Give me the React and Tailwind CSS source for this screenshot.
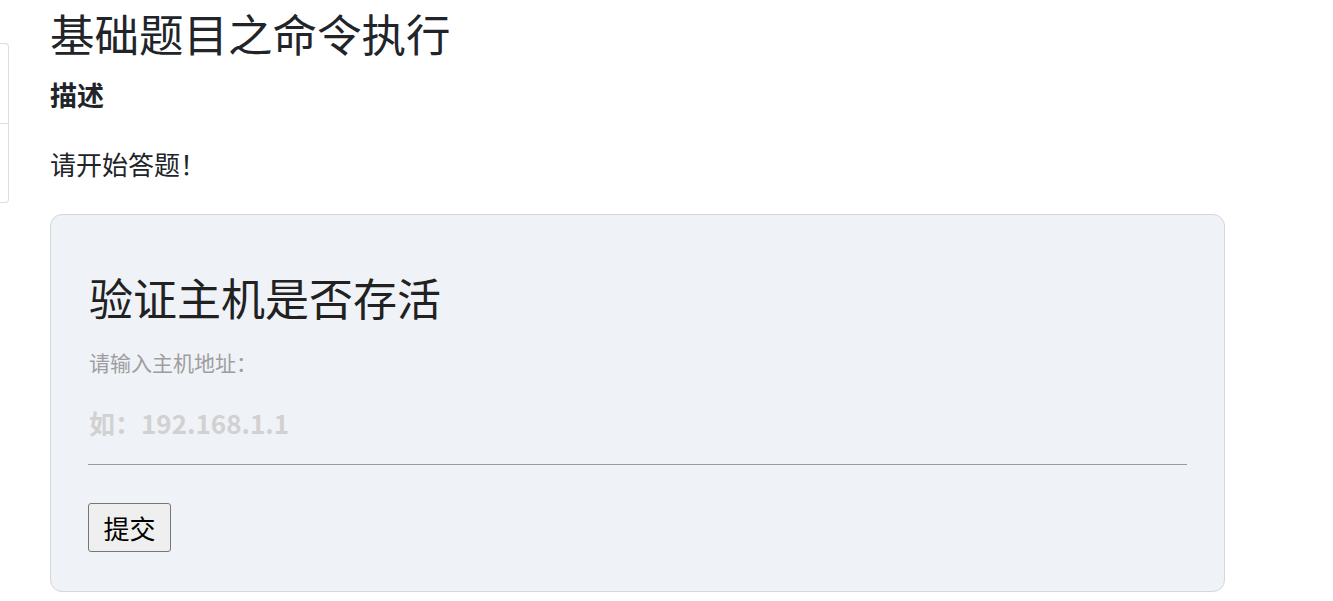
import React from 'react';

const cjk = { fontFamily: '"Microsoft YaHei", "Noto Sans CJK SC", "Noto Sans", sans-serif' };

function SidePanel() {
  return (
    <div className="mt-[43px] w-[9px] h-[160px] flex-shrink-0 flex flex-col border border-l-0 border-[#dedede] rounded-r-[4px] bg-white">
      <div className="h-[80px] border-b border-[#dedede]" />
      <div className="flex-1" />
    </div>
  );
}

export default function App() {
  const [host, setHost] = React.useState('');

  return (
    <div className="min-h-screen w-full bg-white text-[#212529] flex" style={cjk}>
      <SidePanel />

      <main className="ml-[41px] w-[1175px] flex flex-col">
        <h1 className="mt-[7px] text-[44.5px] leading-[52px] font-normal">基础题目之命令执行</h1>

        <h3 className="mt-[20px] text-[27px] leading-[32px] font-bold">描述</h3>

        <p className="mt-[37px] text-[26px] leading-[32px]">请开始答题！</p>

        <div className="mt-[34px] h-[378px] rounded-[12px] border border-[#d6d6d6] bg-[#eff2f7] px-[37px] pt-[56px]">
          <h2 className="pl-[1px] text-[44px] leading-[52px] font-normal text-[#212121]">验证主机是否存活</h2>

          <label className="block mt-[27px] pl-[1px] text-[21px] leading-[24px] text-[#9e9e9e]">
            请输入主机地址：
          </label>

          <input
            value={host}
            onChange={(e) => setHost(e.target.value)}
            placeholder="如：192.168.1.1"
            className="block mt-[17px] w-[1099px] h-[74px] bg-transparent border-0 border-b border-[#9a9a9a] pl-[1px] pb-[11px] text-[26px] font-bold outline-none placeholder:text-[#d1d1d1]"
            style={cjk}
          />

          <button
            className="mt-[38px] w-[83px] h-[49px] bg-[#efefef] border border-[#767676] rounded-[3px] text-[26px] leading-none text-black"
            style={cjk}
          >
            提交
          </button>
        </div>
      </main>
    </div>
  );
}
